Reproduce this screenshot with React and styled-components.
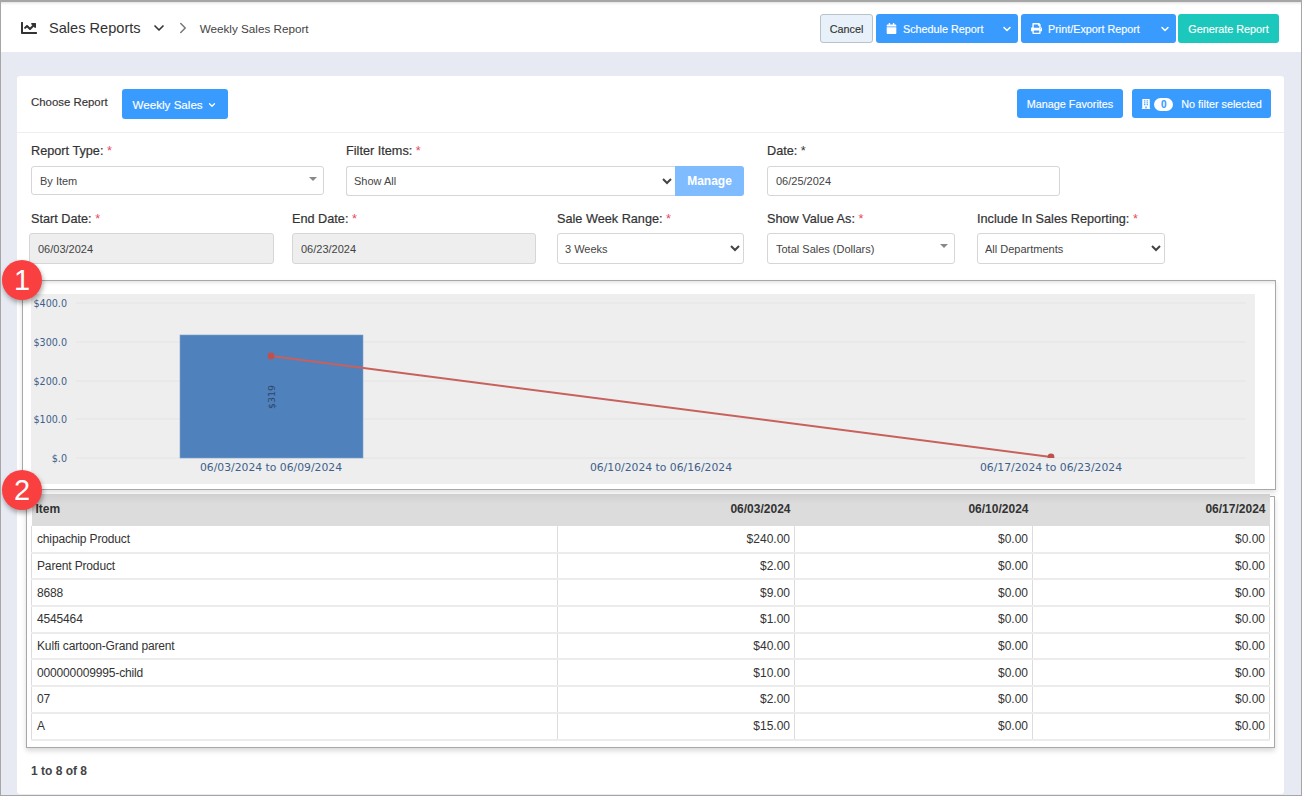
import React from "react";
import styled, { createGlobalStyle } from "styled-components";
import { FaChartLine, FaCalendar, FaPrint, FaBuilding } from "react-icons/fa";
import { ChevronDown, ChevronRight } from "lucide-react";

const GlobalStyle = createGlobalStyle`
  html, body { margin: 0; padding: 0; }
  body { font-family: "Liberation Sans", Arial, sans-serif; color: #333; }
  * { box-sizing: border-box; }
`;

const rows = [
  ["chipachip Product", "$240.00"],
  ["Parent Product", "$2.00"],
  ["8688", "$9.00"],
  ["4545464", "$1.00"],
  ["Kulfi cartoon-Grand parent", "$40.00"],
  ["000000009995-child", "$10.00"],
  ["07", "$2.00"],
  ["A", "$15.00"],
];

const Screen = styled.div`
  position: relative;
  width: 1302px;
  height: 796px;
  overflow: hidden;
  background: #e8eaf3;
  border: 1px solid #a6a6a6;
  border-top-width: 2px;
`;

const Header = styled.header`
  height: 50px;
  display: flex;
  align-items: center;
  background: #fff;
  padding: 2px 22px 0 20px;
  box-shadow: inset 0 3px 3px -2px #ddd;
`;

const Title = styled.div`
  display: flex;
  align-items: center;
  font-size: 14.6px;
  color: #333;
  svg.chart { margin-right: 12px; color: #333; }
  svg.down { margin-left: 10px; }
`;

const Crumb = styled.div`
  display: flex;
  align-items: center;
  margin-left: 7px;
  font-size: 11.7px;
  color: #444;
  svg { margin-right: 8px; color: #777; }
`;

const Actions = styled.div`
  margin-left: auto;
  display: flex;
  gap: 3px;
`;

const Btn = styled.button`
  height: ${(p) => p.$h || 29}px;
  width: ${(p) => p.$w}px;
  display: flex;
  align-items: center;
  justify-content: ${(p) => (p.$start ? "flex-start" : "center")};
  padding: ${(p) => (p.$start ? "1px 0 0 10px" : "1px 0 0")};
  border: 0;
  border-radius: 3px;
  background: ${(p) => p.$bg || "#3a9bff"};
  color: #fff;
  font: 500 10.8px "Liberation Sans", Arial, sans-serif;
  -webkit-text-stroke: 0.15px;
  svg { flex: none; }
`;

const CancelBtn = styled(Btn)`
  background: #e8f1f9;
  border: 1px solid #b9c2c9;
  color: #333;
`;

const GenerateBtn = styled(Btn)`
  margin-left: -1px;
  background: #1cc7bb;
`;

const BtnIcon = styled.span`
  display: flex;
  width: 17px;
  font-size: 11px;
`;

const Caret = styled.span`
  display: flex;
  margin-left: auto;
  margin-right: 5px;
`;

const Card = styled.main`
  margin: 24px 0 0 16px;
  width: 1267px;
  height: 718px;
  background: #fff;
  border-radius: 3px;
`;

const TopBar = styled.div`
  height: 57px;
  display: flex;
  align-items: flex-start;
  padding: 13px 13px 0 14px;
  border-bottom: 1px solid #eceef0;
`;

const ChooseLabel = styled.span`
  font-size: 11.4px;
  font-weight: 500;
  color: #333;
  margin-top: 7px;
  margin-right: 14px;
  -webkit-text-stroke: 0.15px;
`;

const WeeklyBtn = styled(Btn)`
  font-size: 11.6px;
  height: 30px;
  gap: 4px;
`;

const RightButtons = styled.div`
  margin-left: auto;
  display: flex;
  gap: 9px;
`;

const Count = styled.span`
  width: 19px;
  height: 13px;
  margin: 0 8px 0 3px;
  border-radius: 7px;
  background: #fff;
  color: #3a9bff;
  font-size: 10px;
  font-weight: 700;
  line-height: 13px;
  text-align: center;
`;

const FormRow = styled.div`
  display: flex;
  height: ${(p) => p.$h}px;
  padding-left: ${(p) => p.$left}px;
  padding-top: 11px;
`;

const Field = styled.div`
  width: ${(p) => p.$w}px;
  margin-right: ${(p) => p.$gap || 0}px;
`;

const Label = styled.label`
  display: block;
  height: ${(p) => p.$h || 22}px;
  font-size: 12.7px;
  font-weight: 500;
  line-height: 14px;
  color: #333;
  white-space: nowrap;
  padding-left: ${(p) => p.$pad || 0}px;
  -webkit-text-stroke: 0.2px;
`;

const Req = styled.span`
  color: ${(p) => (p.$plain ? "#333" : "#e8485a")};
  -webkit-text-stroke: 0;
`;

const inputLook = `
  width: 100%;
  border: 1px solid #d6d6d6;
  border-radius: 3px;
  background: #fff;
  font: 11px "Liberation Sans", Arial, sans-serif;
  color: #444;
  outline: none;
`;

const Input = styled.input`
  ${inputLook}
  height: ${(p) => p.$h || 30}px;
  padding: 0 8px;
  background: ${(p) => (p.readOnly && p.$grey ? "#eeeeee" : "#fff")};
`;

const Select = styled.select`
  ${inputLook}
  height: ${(p) => p.$h || 30}px;
  padding: 0 3px;
`;

const FakeSelect = styled.div`
  ${inputLook}
  position: relative;
  height: ${(p) => p.$h || 29}px;
  line-height: ${(p) => p.$h || 29}px;
  padding: 0 8px;
  &::after {
    content: "";
    position: absolute;
    right: 6px;
    top: 10px;
    border: 4px solid transparent;
    border-top-color: #888;
    border-bottom: 0;
  }
`;

const InputGroup = styled.div`
  display: flex;
  select { border-radius: 3px 0 0 3px; border-right: 0; }
`;

const ManageBtn = styled.button`
  flex: none;
  width: 69px;
  height: 30px;
  border: 0;
  border-radius: 0 3px 3px 0;
  background: #7ebcff;
  color: #fff;
  font: 700 12px "Liberation Sans", Arial, sans-serif;
`;

const ChartFrame = styled.section`
  margin: 8px 8px 0 5px;
  height: 210px;
  padding: 13px 20px 5px 8px;
  border: 1px solid #a8a8a8;
  box-shadow: 0 3px 5px rgba(0, 0, 0, 0.12), inset 0 4px 4px -3px rgba(0, 0, 0, 0.14);
`;

const ChartBox = styled.svg`
  display: block;
  width: 1224px;
  height: 190px;
  background: #eeeeee;
  text {
    font-family: "DejaVu Sans", sans-serif;
    font-size: 10.8px;
    fill: #3d5f8c;
  }
`;

const TickLabel = styled.text`
  font-size: 9.6px !important;
`;

const BarValue = styled.text`
  font-size: 9.5px !important;
  fill: #2f4668 !important;
`;

const TableFrame = styled.section`
  margin: 6px 9px 0 9px;
  height: 252px;
  padding: 0 4px;
  border: 1px solid #a8a8a8;
  box-shadow: 0 3px 5px rgba(0, 0, 0, 0.15);
`;

const Table = styled.table`
  width: 1238px;
  margin-top: -3px;
  border-collapse: collapse;
  table-layout: fixed;
  font-size: 12px;
  color: #333;
  th {
    height: 32px;
    padding: 0 4px 2px;
    background: linear-gradient(#cfcfcf, #dcdcdc 30%);
    font-weight: 700;
    text-align: right;
  }
  th:first-child { text-align: left; }
  td {
    height: 26.7px;
    padding: 0 4px 0 5px;
    text-align: right;
    border: 1px solid #dcdcdc;
    border-width: 0 1px;
    border-bottom: 2px solid #ececec;
  }
  td:first-child { text-align: left; letter-spacing: -0.15px; }
`;

const Footer = styled.div`
  margin: 16px 0 0 14px;
  font-size: 12px;
  font-weight: 700;
  color: #444;
`;

const Badge = styled.div`
  position: absolute;
  left: 1px;
  top: ${(p) => p.$top}px;
  width: 40px;
  height: 40px;
  border-radius: 50%;
  background: #fa3f40;
  color: #fff;
  font-size: 29px;
  line-height: 40px;
  text-align: center;
  box-shadow: 1px 3px 5px rgba(0, 0, 0, 0.35);
`;

const ticks = [
  ["$400.0", 9],
  ["$300.0", 48],
  ["$200.0", 87],
  ["$100.0", 125],
  ["$.0", 164],
];

const Chart = () => (
  <ChartBox viewBox="0 0 1224 190">
    <defs>
      <clipPath id="plot">
        <rect x="45" y="0" width="1170" height="164" />
      </clipPath>
    </defs>
    {ticks.map(([label, y]) => (
      <g key={label}>
        <line x1="45" x2="1215" y1={y} y2={y} stroke="#e4e4e4" strokeWidth="1.2" />
        <TickLabel x="36" y={y + 4} textAnchor="end">{label}</TickLabel>
      </g>
    ))}
    <rect x="149" y="41" width="183" height="123" fill="#4f81bd" stroke="#7ea3d0" strokeWidth="0.6" />
    <g clipPath="url(#plot)">
      <polyline points="240,62 1020,163" fill="none" stroke="#c8605c" strokeWidth="2" />
      <circle cx="240" cy="62" r="3.4" fill="#c0504d" />
      <circle cx="1020" cy="163" r="3.4" fill="#c0504d" />
    </g>
    <BarValue transform="translate(244,103) rotate(-90)" textAnchor="middle">$319</BarValue>
    <text x="240" y="177" textAnchor="middle">06/03/2024 to 06/09/2024</text>
    <text x="630" y="177" textAnchor="middle">06/10/2024 to 06/16/2024</text>
    <text x="1020" y="177" textAnchor="middle">06/17/2024 to 06/23/2024</text>
  </ChartBox>
);

export default function App() {
  return (
    <>
      <GlobalStyle />
      <Screen>
        <Header>
          <Title>
            <FaChartLine className="chart" size={16} />
            Sales Reports
            <ChevronDown className="down" size={16} strokeWidth={2.5} />
          </Title>
          <Crumb>
            <ChevronRight size={18} />
            Weekly Sales Report
          </Crumb>
          <Actions>
            <CancelBtn $w={53}>Cancel</CancelBtn>
            <Btn $w={142} $start>
              <BtnIcon><FaCalendar /></BtnIcon>
              Schedule Report
              <Caret><ChevronDown size={12} strokeWidth={3} /></Caret>
            </Btn>
            <Btn $w={155} $start>
              <BtnIcon><FaPrint /></BtnIcon>
              Print/Export Report
              <Caret><ChevronDown size={12} strokeWidth={3} /></Caret>
            </Btn>
            <GenerateBtn $w={101}>Generate Report</GenerateBtn>
          </Actions>
        </Header>
        <Card>
          <TopBar>
            <ChooseLabel>Choose Report</ChooseLabel>
            <WeeklyBtn $w={106}>
              Weekly Sales
              <ChevronDown size={10} strokeWidth={3} />
            </WeeklyBtn>
            <RightButtons>
              <Btn $w={106} $h={29}>Manage Favorites</Btn>
              <Btn $w={139} $h={29}>
                <FaBuilding size={10} />
                <Count>0</Count>
                No filter selected
              </Btn>
            </RightButtons>
          </TopBar>
          <FormRow $h={68} $left={14}>
            <Field $w={293} $gap={22}>
              <Label>Report Type: <Req>*</Req></Label>
              <FakeSelect>By Item</FakeSelect>
            </Field>
            <Field $w={398} $gap={23}>
              <Label>Filter Items: <Req>*</Req></Label>
              <InputGroup>
                <Select defaultValue="all">
                  <option value="all">Show All</option>
                </Select>
                <ManageBtn>Manage</ManageBtn>
              </InputGroup>
            </Field>
            <Field $w={293}>
              <Label>Date: <Req $plain>*</Req></Label>
              <Input value="06/25/2024" readOnly />
            </Field>
          </FormRow>
          <FormRow $h={71} $left={12}>
            <Field $w={245} $gap={18}>
              <Label $h={21} $pad={2}>Start Date: <Req>*</Req></Label>
              <Input value="06/03/2024" readOnly $grey $h={31} />
            </Field>
            <Field $w={244} $gap={21}>
              <Label $h={21}>End Date: <Req>*</Req></Label>
              <Input value="06/23/2024" readOnly $grey $h={31} />
            </Field>
            <Field $w={187} $gap={23}>
              <Label $h={21}>Sale Week Range: <Req>*</Req></Label>
              <Select defaultValue="3" $h={31}>
                <option value="3">3 Weeks</option>
              </Select>
            </Field>
            <Field $w={188} $gap={22}>
              <Label $h={21}>Show Value As: <Req>*</Req></Label>
              <FakeSelect $h={31}>Total Sales (Dollars)</FakeSelect>
            </Field>
            <Field $w={188}>
              <Label $h={21}>Include In Sales Reporting: <Req>*</Req></Label>
              <Select defaultValue="all" $h={31}>
                <option value="all">All Departments</option>
              </Select>
            </Field>
          </FormRow>
          <ChartFrame>
            <Chart />
          </ChartFrame>
          <TableFrame>
            <Table>
              <colgroup>
                <col style={{ width: 526 }} />
                <col style={{ width: 237 }} />
                <col style={{ width: 238 }} />
                <col style={{ width: 237 }} />
              </colgroup>
              <thead>
                <tr>
                  <th>Item</th>
                  <th>06/03/2024</th>
                  <th>06/10/2024</th>
                  <th>06/17/2024</th>
                </tr>
              </thead>
              <tbody>
                {rows.map(([name, amount]) => (
                  <tr key={name}>
                    <td>{name}</td>
                    <td>{amount}</td>
                    <td>$0.00</td>
                    <td>$0.00</td>
                  </tr>
                ))}
              </tbody>
            </Table>
          </TableFrame>
          <Footer>1 to 8 of 8</Footer>
        </Card>
        <Badge $top={258}>1</Badge>
        <Badge $top={468}>2</Badge>
      </Screen>
    </>
  );
}
